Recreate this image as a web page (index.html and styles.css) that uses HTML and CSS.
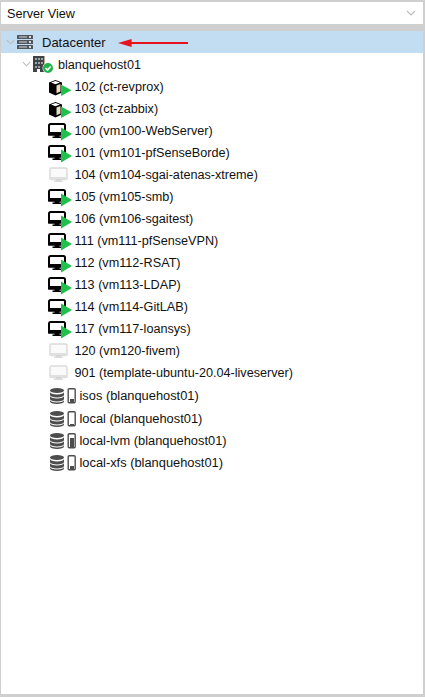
FILE: index.html
```html
<!DOCTYPE html>
<html lang="en">
<head>
<meta charset="utf-8">
<title>Server View</title>
<link rel="stylesheet" href="styles.css">
</head>
<body>
<svg class="defs" width="0" height="0" aria-hidden="true">
  <defs>
    <symbol id="chev" viewBox="0 0 10 6"><path d="M1 1l4 4 4-4" fill="none" stroke="#bcbcbc" stroke-width="1.2"/></symbol>
    <symbol id="vm" viewBox="0 0 25 22">
      <path d="M2.500 5h13a1.500 1.500 0 0 1 1.500 1.500v9h-16v-9a1.500 1.500 0 0 1 1.500-1.500z" fill="#fff" stroke="#000" stroke-width="2"/>
      <rect x=".5" y="13" width="17" height="3.500" fill="#000"/>
      <rect x="6.500" y="16" width="5" height="2" fill="#000"/>
      <rect x="4.500" y="17.500" width="9" height="1.500" fill="#000"/>
      <path d="M13 8.500l11 6.500-11 6.500z" fill="#21bf4b"/>
    </symbol>
    <symbol id="tpl" viewBox="0 0 25 22">
      <rect x="2" y="5" width="17" height="11.500" rx="1.500" fill="#fafafa" stroke="#dcdcdc" stroke-width="1.500"/>
      <rect x="1.500" y="14" width="18" height="2.500" fill="#e0e0e0"/>
      <rect x="8" y="16" width="5" height="2" fill="#d4d4d4"/>
      <rect x="6" y="17.500" width="9" height="1.500" fill="#dcdcdc"/>
    </symbol>
    <symbol id="ct" viewBox="0 0 25 22">
      <path d="M7.500 5l6.500 2.500v10l-6.500 3-6.500-3v-10z" fill="#000"/>
      <path d="M3 7.500l4.500-1.500 4.500 1.500-4.500 1.800z" fill="#fff"/>
      <path d="M8.500 10.500v7.800l4-1.800v-7.500z" fill="#e9dcc0"/>
      <path d="M13 9.500l10.500 5.700-10.500 5.700z" fill="#21bf4b"/>
    </symbol>
    <symbol id="dc" viewBox="0 0 17 15">
      <g fill="#50555b">
        <rect x="0" y="0" width="16" height="4" rx=".6"/>
        <rect x="0" y="5" width="16" height="4" rx=".6"/>
        <rect x="0" y="10" width="16" height="4" rx=".6"/>
      </g>
      <g fill="#d4dae0">
        <rect x="2" y="1.500" width="8" height="1"/>
        <rect x="2" y="6.500" width="8" height="1"/>
        <rect x="2" y="11.500" width="8" height="1"/>
        <rect x="12" y="1" width="2" height="2"/>
        <rect x="12" y="6" width="2" height="2"/>
        <rect x="12" y="11" width="2" height="2"/>
      </g>
    </symbol>
    <symbol id="host" viewBox="0 0 21 18">
      <rect x="0" y="0" width="12" height="16" fill="#3f4347"/>
      <path d="M12 0v16h-1V0z" fill="#b9a98c"/>
      <g fill="#9da3a8">
        <rect x="2" y="2" width="2" height="2"/><rect x="5" y="2" width="2" height="2"/><rect x="8" y="2" width="2" height="2"/>
        <rect x="2" y="6" width="2" height="2"/><rect x="5" y="6" width="2" height="2"/><rect x="8" y="6" width="2" height="2"/>
        <rect x="2" y="10" width="2" height="2"/><rect x="5" y="10" width="2" height="2"/>
      </g>
      <rect x="4" y="13" width="3" height="3" fill="#fff"/>
      <circle cx="15" cy="12" r="5.500" fill="#fff"/>
      <circle cx="15" cy="12" r="5" fill="#21b24b"/>
      <path d="M12.500 12l2 2 3.200-3.500" fill="none" stroke="#fff" stroke-width="1.600"/>
    </symbol>
    <symbol id="db" viewBox="0 0 28 22">
      <g fill="#4d4d4d">
        <ellipse cx="9" cy="6.500" rx="7" ry="2.600"/>
        <path d="M2 8a7 2.600 0 0 0 14 0v3a7 2.600 0 0 1-14 0z"/>
        <path d="M2 12a7 2.600 0 0 0 14 0v3a7 2.600 0 0 1-14 0z"/>
        <path d="M2 16a7 2.600 0 0 0 14 0v1.500a7 2.600 0 0 1-14 0z"/>
      </g>
      <rect x="20.200" y="4.700" width="7" height="14" rx="1" fill="#fff" stroke="#4d4d4d" stroke-width="1.400"/>
    </symbol>
  </defs>
</svg>
<div class="panel">
  <div class="select">
    <span class="select-label">Server View</span>
    <svg class="select-chev"><use href="#chev"/></svg>
  </div>
  <div class="tree">
    <div class="row row-selected depth-0">
      <svg class="chev"><use href="#chev"/></svg>
      <svg class="icon-dc"><use href="#dc"/></svg>
      <span class="label">Datacenter</span>
      <svg class="callout" viewBox="0 0 72 8"><path d="M72 3H14V0L0 4l14 4V5h58z" fill="#e8141c"/></svg>
    </div>
    <div class="row depth-1">
      <svg class="chev"><use href="#chev"/></svg>
      <svg class="icon-host"><use href="#host"/></svg>
      <span class="label">blanquehost01</span>
    </div>
    <div class="row depth-2"><svg class="icon-guest"><use href="#ct"/></svg><span class="label">102 (ct-revprox)</span></div>
    <div class="row depth-2"><svg class="icon-guest"><use href="#ct"/></svg><span class="label">103 (ct-zabbix)</span></div>
    <div class="row depth-2"><svg class="icon-guest"><use href="#vm"/></svg><span class="label">100 (vm100-WebServer)</span></div>
    <div class="row depth-2"><svg class="icon-guest"><use href="#vm"/></svg><span class="label">101 (vm101-pfSenseBorde)</span></div>
    <div class="row depth-2"><svg class="icon-guest"><use href="#tpl"/></svg><span class="label">104 (vm104-sgai-atenas-xtreme)</span></div>
    <div class="row depth-2"><svg class="icon-guest"><use href="#vm"/></svg><span class="label">105 (vm105-smb)</span></div>
    <div class="row depth-2"><svg class="icon-guest"><use href="#vm"/></svg><span class="label">106 (vm106-sgaitest)</span></div>
    <div class="row depth-2"><svg class="icon-guest"><use href="#vm"/></svg><span class="label">111 (vm111-pfSenseVPN)</span></div>
    <div class="row depth-2"><svg class="icon-guest"><use href="#vm"/></svg><span class="label">112 (vm112-RSAT)</span></div>
    <div class="row depth-2"><svg class="icon-guest"><use href="#vm"/></svg><span class="label">113 (vm113-LDAP)</span></div>
    <div class="row depth-2"><svg class="icon-guest"><use href="#vm"/></svg><span class="label">114 (vm114-GitLAB)</span></div>
    <div class="row depth-2"><svg class="icon-guest"><use href="#vm"/></svg><span class="label">117 (vm117-loansys)</span></div>
    <div class="row depth-2"><svg class="icon-guest"><use href="#tpl"/></svg><span class="label">120 (vm120-fivem)</span></div>
    <div class="row depth-2"><svg class="icon-guest"><use href="#tpl"/></svg><span class="label">901 (template-ubuntu-20.04-liveserver)</span></div>
    <div class="row depth-2 row-spaced"><span class="storage"><svg class="icon-db"><use href="#db"/></svg><i class="usage usage-sm"></i></span><span class="label label-storage">isos (blanquehost01)</span></div>
    <div class="row depth-2 row-spaced"><span class="storage"><svg class="icon-db"><use href="#db"/></svg><i class="usage usage-xs"></i></span><span class="label label-storage">local (blanquehost01)</span></div>
    <div class="row depth-2"><span class="storage"><svg class="icon-db"><use href="#db"/></svg><i class="usage usage-lg"></i></span><span class="label label-storage">local-lvm (blanquehost01)</span></div>
    <div class="row depth-2"><span class="storage"><svg class="icon-db"><use href="#db"/></svg><i class="usage usage-sm"></i></span><span class="label label-storage">local-xfs (blanquehost01)</span></div>
  </div>
</div>
</body>
</html>
```
FILE: styles.css
```css
html, body {
  margin: 0;
  height: 100%;
  overflow: hidden;
}
body {
  background: #cfcfcf;
  font-family: "Liberation Sans", Arial, sans-serif;
  font-size: 12.65px;
  color: #111;
}
.defs { position: absolute; }
.panel {
  box-sizing: border-box;
  height: 697px;
  padding: 2px 2px 3px 1px;
  display: flex;
  flex-direction: column;
  gap: 7px;
}
.select {
  height: 22px;
  flex: none;
  background: #fff;
  display: flex;
  align-items: center;
  justify-content: space-between;
  padding: 0 7px 0 6px;
}
.select-label { font-size: 12.65px; padding-top: 1px; }
.select-chev { width: 10px; height: 6px; }
.tree {
  flex: 1;
  background: #fff;
}
.row {
  position: relative;
  height: 22px;
  display: flex;
  align-items: center;
  white-space: nowrap;
}
.row-spaced { margin-top: 1px; }
.row-selected { background: #c2dcf1; }
.label { font-size: 12.65px; padding-top: 1px; }
.chev { width: 9px; height: 6px; flex: none; }
.depth-0 { padding-left: 5px; }
.depth-0 .label { font-size: 13px; padding-top: 0; margin-left: 8px; }
.icon-dc { width: 17px; height: 15px; margin-left: 2px; flex: none; }
.depth-1 { padding-left: 21px; }
.depth-1 .label { margin-left: 4px; }
.icon-host { width: 21px; height: 18px; margin-left: 2px; margin-top: 1px; flex: none; }
.depth-2 { padding-left: 47px; }
.icon-guest { width: 25px; height: 22px; flex: none; }
.depth-2 .label { margin-left: 1.5px; }
.depth-2 .label-storage { font-size: 12.85px; margin-left: 3.5px; }
.callout {
  position: absolute;
  left: 117px;
  top: 8px;
  width: 70px;
  height: 8px;
}
.storage { position: relative; display: flex; width: 28px; height: 22px; }
.icon-db { width: 28px; height: 22px; flex: none; }
.usage {
  position: absolute;
  left: 21.5px;
  bottom: 4px;
  width: 4px;
  background: #4d4d4d;
}
.usage-xs { height: 1px; }
.usage-sm { height: 3px; }
.usage-lg { height: 9px; }
```
